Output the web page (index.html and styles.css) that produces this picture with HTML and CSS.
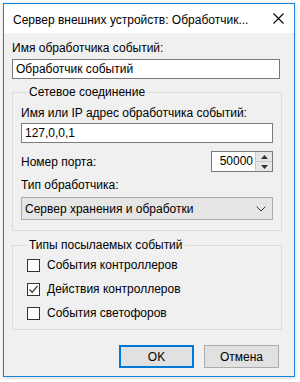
FILE: index.html
```html
<!DOCTYPE html>
<html lang="ru">
<head>
    <meta charset="UTF-8">
    <title>Сервер внешних устройств</title>
    <link rel="stylesheet" href="styles.css">
</head>
<body>
    <div class="window">
        <div class="titlebar">
            <span class="title">Сервер внешних устройств: Обработчик...</span>
            <svg class="close" width="11" height="11" viewBox="0 0 11 11">
                <path d="M0.5 0.5 L10.5 10.5 M10.5 0.5 L0.5 10.5" stroke="#000" stroke-width="1.1" fill="none"/>
            </svg>
        </div>
        <div class="content">
            <div class="label first">Имя обработчика событий:</div>
            <div class="textbox wide">Обработчик событий</div>

            <fieldset class="group net">
                <legend>Сетевое соединение</legend>
                <div class="label">Имя или IP адрес обработчика событий:</div>
                <div class="textbox">127,0,0,1</div>
                <div class="port-row">
                    <span>Номер порта:</span>
                    <div class="spin">
                        <span class="spin-value">50000</span>
                        <div class="spin-btns">
                            <div class="spin-btn"><svg width="7" height="4" viewBox="0 0 7 4"><path d="M0 4 L3.5 0 L7 4 Z" fill="#333"/></svg></div>
                            <div class="spin-btn"><svg width="7" height="4" viewBox="0 0 7 4"><path d="M0 0 L3.5 4 L7 0 Z" fill="#333"/></svg></div>
                        </div>
                    </div>
                </div>
                <div class="label type">Тип обработчика:</div>
                <div class="combo">
                    <span>Сервер хранения и обработки</span>
                    <svg width="10" height="6" viewBox="0 0 10 6"><path d="M0.5 0.5 L5 5 L9.5 0.5" stroke="#333" stroke-width="1" fill="none"/></svg>
                </div>
            </fieldset>

            <fieldset class="group events">
                <legend>Типы посылаемых событий</legend>
                <label class="check"><span class="box"></span>События контроллеров</label>
                <label class="check"><span class="box"><svg width="11" height="11" viewBox="0 0 11 11"><path d="M1.5 5.5 L4.2 8.3 L9.5 2" stroke="#333" stroke-width="1.2" fill="none"/></svg></span>Действия контроллеров</label>
                <label class="check"><span class="box"></span>События светофоров</label>
            </fieldset>

            <div class="buttons">
                <button class="btn default">OK</button>
                <button class="btn">Отмена</button>
            </div>
        </div>
    </div>
</body>
</html>
```

FILE: styles.css
```css
body {
    margin: 0;
    background-color: #fff;
    font-family: "Liberation Sans", Arial, sans-serif;
    font-size: 12px;
    color: #000;
}
.window {
    margin: 3px;
    width: 292px;
    height: 374px;
    box-sizing: border-box;
    border: 1px solid #1883d7;
    background-color: #f0f0f0;
    box-shadow: 0 1px 5px rgba(0, 0, 0, 0.18);
    display: flex;
    flex-direction: column;
}
.titlebar {
    height: 29px;
    background-color: #fff;
    display: flex;
    align-items: center;
    justify-content: space-between;
    padding: 2px 10px 0 9px;
    box-sizing: border-box;
}
.title {
    font-size: 12px;
}
.close {
    margin-bottom: 3px;
}
.content {
    padding: 0 12px 0 8px;
}
.label {
    height: 14px;
    line-height: 14px;
}
.label.first {
    margin-top: 8px;
}
.textbox {
    height: 20px;
    box-sizing: border-box;
    border: 1px solid #7a7a7a;
    background-color: #fff;
    line-height: 18px;
    padding-left: 3px;
    margin-top: 3px;
}
.textbox.wide {
    margin-top: 4px;
    margin-right: 2px;
}
.group {
    margin: 0;
    border: 1px solid #dcdcdc;
    padding: 0 8px;
}
.group legend {
    margin-left: 6px;
    padding: 0 2px;
    height: 14px;
    line-height: 14px;
}
.net {
    margin-top: 6px;
    padding-bottom: 10px;
}
.net .label:first-of-type {
    margin-top: 7px;
}
.port-row {
    display: flex;
    justify-content: space-between;
    align-items: center;
    margin-top: 8px;
}
.spin {
    width: 62px;
    height: 21px;
    box-sizing: border-box;
    border: 1px solid #7a7a7a;
    background-color: #fff;
    display: flex;
}
.spin-value {
    flex: 1;
    text-align: right;
    line-height: 19px;
    padding-right: 2px;
}
.spin-btns {
    width: 16px;
    display: flex;
    flex-direction: column;
    border-left: 1px solid #c8c8c8;
}
.spin-btn {
    flex: 1;
    background-color: #e6e6e6;
    display: flex;
    align-items: center;
    justify-content: center;
}
.spin-btn + .spin-btn {
    border-top: 1px solid #c8c8c8;
}
.label.type {
    margin-top: 6px;
}
.combo {
    margin-top: 5px;
    height: 23px;
    box-sizing: border-box;
    border: 1px solid #acacac;
    background-color: #e5e5e5;
    display: flex;
    align-items: center;
    justify-content: space-between;
    padding: 0 6px 0 3px;
}
.events {
    margin-top: 7px;
    padding-bottom: 4px;
}
.check {
    display: flex;
    align-items: center;
    height: 24px;
}
.check:first-of-type {
    margin-top: 1px;
}
.box {
    width: 13px;
    height: 13px;
    box-sizing: border-box;
    border: 1px solid #333;
    background-color: #fff;
    margin: 0 7px 0 6px;
    display: flex;
    align-items: center;
    justify-content: center;
}
.buttons {
    display: flex;
    justify-content: flex-end;
    gap: 10px;
    margin-top: 15px;
    padding-right: 3px;
}
.btn {
    width: 75px;
    height: 23px;
    box-sizing: border-box;
    border: 1px solid #adadad;
    background-color: #e1e1e1;
    font-family: inherit;
    font-size: 12px;
    color: #000;
    padding: 0;
}
.btn.default {
    border: 2px solid #0078d7;
}
```
